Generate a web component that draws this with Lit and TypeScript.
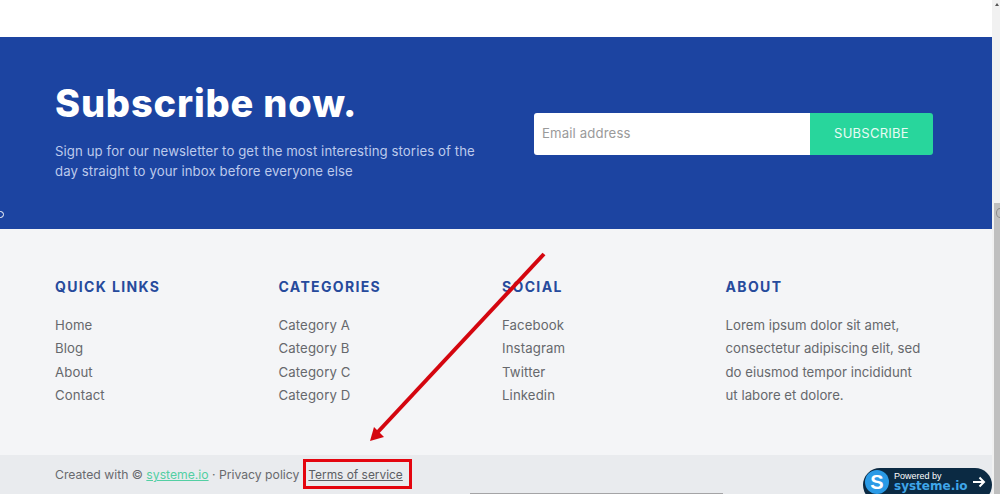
import { LitElement, html, css, svg } from "lit";
import { customElement } from "lit/decorators.js";

const COLUMNS = [
  { title: "QUICK LINKS", links: ["Home", "Blog", "About", "Contact"] },
  { title: "CATEGORIES", links: ["Category A", "Category B", "Category C", "Category D"] },
  { title: "SOCIAL", links: ["Facebook", "Instagram", "Twitter", "Linkedin"] },
];

@customElement("app-root")
export class AppRoot extends LitElement {
  static styles = css`
    :host {
      display: block;
      position: relative;
      width: 1000px;
      height: 494px;
      overflow: hidden;
      font-family: Inter, "Open Sans", sans-serif;
      background: #fff;
    }
    .shell { display: flex; height: 494px; }
    .page { flex: 1; min-width: 0; display: flex; flex-direction: column; }
    .top { height: 37px; background: #fff; flex: none; }
    .hero {
      flex: none;
      height: 192px;
      box-sizing: border-box;
      background: #1c44a1;
      padding: 43px 59px 0 55px;
      display: flex;
      justify-content: space-between;
      color: #fff;
    }
    .hero-copy { width: 440px; }
    h1 {
      margin: 0;
      font-size: 38px;
      line-height: 46px;
      font-weight: 800;
      letter-spacing: 0.82px;
    }
    .hero-copy p {
      margin: 15px 0 0;
      font-size: 13.2px;
      line-height: 20px;
      color: #bccaec;
      letter-spacing: 0.09px;
    }
    .form { display: flex; width: 399px; height: 42px; margin-top: 33px; }
    .email {
      flex: 1;
      background: #fff;
      border-radius: 3px 0 0 3px;
      padding: 0 0 2px 8px;
      display: flex;
      align-items: center;
      color: #9a9a9a;
      font-size: 13.2px;
      letter-spacing: 0.13px;
    }
    .btn {
      width: 123px;
      padding-bottom: 2px;
      box-sizing: border-box;
      background: #28d69c;
      border-radius: 0 3px 3px 0;
      display: flex;
      align-items: center;
      justify-content: center;
      color: #e8fbf4;
      font-size: 13px;
      letter-spacing: 0.25px;
    }
    .footer {
      flex: 1;
      background: #f4f5f7;
      padding: 49px 43px 0 55px;
      display: grid;
      grid-template-columns: repeat(4, 223.5px);
      align-content: start;
      color: #66686c;
    }
    h2 {
      margin: 0 0 18px;
      font-size: 14px;
      line-height: 18px;
      font-weight: 700;
      letter-spacing: 1.35px;
      color: #264a9c;
    }
    .col-links { display: flex; flex-direction: column; }
    .col-links span, .about {
      font-size: 13.2px;
      line-height: 23.4px;
      letter-spacing: 0.12px;
    }
    .about { margin: 0; width: 200px; letter-spacing: 0.03px; }
    .legal {
      flex: none;
      height: 39px;
      background: #e9ebee;
      padding-left: 55px;
      display: flex;
      align-items: center;
      font-size: 12.2px;
      color: #68696d;
      white-space: pre;
    }
    .legal .green { color: #53cfa3; text-decoration: underline; }
    .legal .terms { text-decoration: underline; margin-left: 9px; color: #5c5e63; font-size: 11.9px; }
    .scroll {
      flex: none;
      position: relative;
      width: 8px;
      background: #f1f1f1;
      display: flex;
      flex-direction: column;
      padding-top: 203px;
      box-sizing: border-box;
    }
    .thumb { flex: 1; background: #bfbfbf; margin-left: 2px; }
    .caret {
      position: absolute; left: 3px; top: 3px;
      border-left: 2.500px solid transparent;
      border-right: 2.500px solid transparent;
      border-bottom: 3px solid #555;
    }
    .thumb-dot {
      position: absolute; left: 4px; top: 208px; width: 6px; height: 8px;
      border: 1px solid #8a8a8a; border-radius: 50%;
    }
    .mark { position: absolute; left: 303px; top: 459px; width: 103px; height: 24px; border: 3px solid #e4050f; }
    .arrow { position: absolute; left: 0; top: 0; pointer-events: none; }
    .sliver { position: absolute; left: 470px; top: 493px; width: 253px; height: 1px; background: #a4a4a6; }
    .badge {
      position: absolute;
      left: 863px;
      top: 468px;
      width: 129px;
      height: 34px;
      border-radius: 17px;
      background: #0b2a43;
      color: #fff;
    }
    .badge-s {
      position: absolute;
      left: 2px;
      top: 2px;
      width: 24px;
      height: 24px;
      border-radius: 50%;
      background: #2a9ae6;
      text-align: center;
      font: 700 20px/24px "Liberation Sans", sans-serif;
    }
    .badge-a { position: absolute; left: 31px; top: 3px; font: 9px/11px "Liberation Sans", sans-serif; }
    .badge-b { position: absolute; left: 31px; top: 10px; font: 700 12px/16px "DejaVu Sans", sans-serif; color: #3fa6ea; }
    .badge svg { position: absolute; left: 109px; top: 8px; }
    .dot {
      position: absolute; left: -3px; top: 211px; width: 5px; height: 5px;
      border: 1px solid #fff; border-radius: 50%;
    }
  `;

  render() {
    return html`
      <div class="shell">
        <div class="page">
          <div class="top"></div>
          <section class="hero">
            <div class="hero-copy">
              <h1>Subscribe now.</h1>
              <p>Sign up for our newsletter to get the most interesting stories of the day straight to your inbox before everyone else</p>
            </div>
            <div class="form">
              <div class="email">Email address</div>
              <div class="btn">SUBSCRIBE</div>
            </div>
          </section>
          <section class="footer">
            ${COLUMNS.map(
              (c) => html`<div>
                <h2>${c.title}</h2>
                <div class="col-links">${c.links.map((l) => html`<span>${l}</span>`)}</div>
              </div>`
            )}
            <div>
              <h2>ABOUT</h2>
              <p class="about">Lorem ipsum dolor sit amet, consectetur adipiscing elit, sed do eiusmod tempor incididunt ut labore et dolore.</p>
            </div>
          </section>
          <div class="legal"><span>Created with © </span><span class="green">systeme.io</span><span> · Privacy policy</span><span class="terms">Terms of service</span></div>
        </div>
        <div class="scroll"><div class="caret"></div><div class="thumb"></div><div class="thumb-dot"></div></div>
      </div>
      <div class="dot"></div>
      <div class="sliver"></div>
      <svg class="arrow" width="1000" height="494" viewBox="0 0 1000 494">
        ${svg`<line x1="544" y1="254" x2="376" y2="434" stroke="#d4060f" stroke-width="4"/>
        <polygon points="370,441 374,427 384,437" fill="#d4060f"/>`}
      </svg>
      <div class="mark"></div>
      <div class="badge">
        <div class="badge-s">S</div>
        <div class="badge-a">Powered by</div>
        <div class="badge-b">systeme.io</div>
        <svg width="14" height="12" viewBox="0 0 14 12" fill="none" stroke="#fff" stroke-width="2"><path d="M1 6h11M7.500 1.500 12 6l-4.500 4.500"/></svg>
      </div>
    `;
  }
}
